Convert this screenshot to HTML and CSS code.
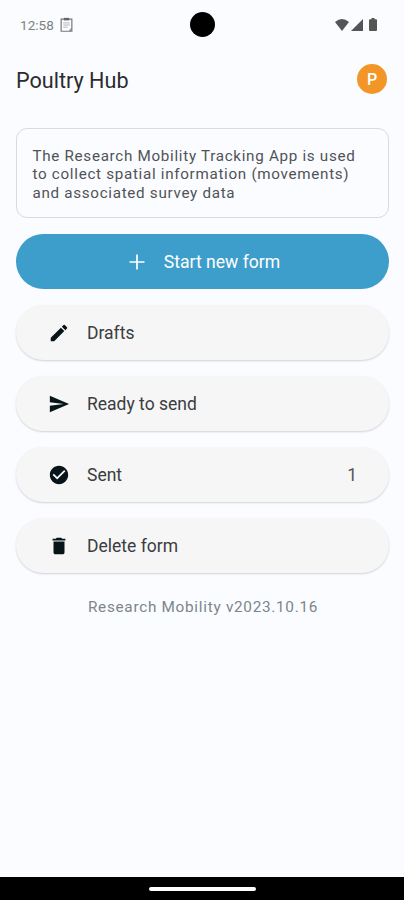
FILE: index.html
```
<!DOCTYPE html>
<html lang="en">
<head>
<meta charset="utf-8">
<title>Poultry Hub</title>
<link rel="stylesheet" href="styles.css">
</head>
<body>
<div class="screen">
  <header class="status">
    <div class="status-left">
      <span class="time">12:58</span>
      <svg class="clip" viewBox="0 0 12 14"><path d="M1 2h10v11.300H1z" fill="none" stroke="#777" stroke-width="1.100"/><path d="M3.500.8h5v2.400h-5z" fill="#666"/><path d="M3 5.500h6M3 7.500h6M3 9.500h4" stroke="#aaa" stroke-width=".8"/><path d="M8 12.800l3-3v3z" fill="#888"/></svg>
    </div>
    <span class="camera"></span>
    <div class="status-right">
      <svg class="wifi" viewBox="0 0 14 12"><path d="M0 3Q7-2.800 14 3L7 12z"/></svg>
      <svg class="signal" viewBox="0 0 12 12"><path d="M12 0v12H0z"/></svg>
      <svg class="battery" viewBox="0 0 8 13"><path d="M2.500 0h3v1.300H7q1 0 1 1V12q0 1-1 1H1q-1 0-1-1V2.300q0-1 1-1h1.500z"/></svg>
    </div>
  </header>
  <div class="appbar"><h1>Poultry Hub</h1><span class="avatar">P</span></div>
  <main>
    <p class="card">The Research Mobility Tracking App is used<br>to collect spatial information (movements)<br>and associated survey data</p>
    <div class="button primary">
      <svg class="plus" viewBox="0 0 16 16"><path d="M8 .5v15M.5 8h15" stroke="#fff" stroke-width="1.700"/></svg>
      <span>Start new form</span>
    </div>
    <div class="button"><svg class="icon" viewBox="0 0 24 24"><path d="M3 17.250V21h3.750L17.810 9.940l-3.750-3.750L3 17.250zM20.710 7.040a1 1 0 0 0 0-1.410l-2.340-2.340a1 1 0 0 0-1.410 0l-1.830 1.830 3.750 3.750 1.830-1.830z"/></svg><span>Drafts</span></div>
    <div class="button"><svg class="icon" viewBox="0 0 24 24"><path d="M2.010 21L23 12 2.010 3 2 10l15 2-15 2z"/></svg><span>Ready to send</span></div>
    <div class="button"><svg class="icon" viewBox="0 0 24 24"><path d="M12 2C6.480 2 2 6.480 2 12s4.480 10 10 10 10-4.480 10-10S17.520 2 12 2zm-2 15l-5-5 1.410-1.410L10 14.170l7.590-7.590L19 8l-9 9z"/></svg><span>Sent</span><span class="count">1</span></div>
    <div class="button"><svg class="icon" viewBox="0 0 24 24"><path d="M6 19c0 1.100.9 2 2 2h8c1.100 0 2-.9 2-2V7H6v12zM19 4h-3.500l-1-1h-5l-1 1H5v2h14V4z"/></svg><span>Delete form</span></div>
    <p class="version">Research Mobility v2023.10.16</p>
  </main>
  <footer><span></span></footer>
</div>
</body>
</html>
```
FILE: styles.css
```
* { box-sizing: border-box; }
body { margin: 0; font-family: Roboto, sans-serif; background: #fbfcff; }
h1, p { margin: 0; font-weight: 400; }
svg { display: block; flex: none; }
.screen { width: 404px; height: 900px; display: flex; flex-direction: column; }
.status { height: 49px; display: grid; grid-template-columns: 170px 25px 1fr; align-items: center; padding: 0 27px 0 20px; }
.status-left { display: flex; align-items: center; gap: 6px; }
.time { font-size: 13.5px; line-height: 16px; color: #808080; letter-spacing: .05px; }
.clip { width: 13px; height: 15px; }
.camera { width: 25px; height: 25px; border-radius: 50%; background: #000; }
.status-right { display: flex; align-items: center; justify-content: flex-end; fill: #555; }
.wifi { width: 14px; height: 12px; margin-right: 2px; }
.signal { width: 12px; height: 12px; margin-right: 6px; }
.battery { width: 8px; height: 13px; }
.appbar { height: 64px; display: flex; align-items: center; justify-content: space-between; padding: 0 17px 4px 16px; }
h1 { font-size: 21.6px; line-height: 28px; color: #2a2c2f; padding-top: 4px; }
.avatar { width: 30px; height: 30px; border-radius: 50%; background: #f29727; color: #fff; font-size: 16px; font-weight: 500; line-height: 31px; text-align: center; }
main { flex: 1; padding: 15px 15px 0 16px; display: flex; flex-direction: column; gap: 16px; }
.card { height: 90px; border: 1.5px solid #d8dade; border-radius: 11px; padding: 18px 15px 0 15.5px; font-size: 15.2px; line-height: 18.3px; letter-spacing: .7px; color: #505356; white-space: nowrap; }
.button { height: 55px; border-radius: 28px; background: #f6f6f6; box-shadow: 0 1px 2px rgba(0,0,0,.17); display: flex; align-items: center; padding: 0 32px; font-size: 17.5px; color: #3b3d3f; }
.icon { width: 22px; height: 22px; margin-right: 17px; fill: #07151b; }
.count { margin-left: auto; color: #555; }
.primary { background: #3e9ecb; color: #fff; box-shadow: none; justify-content: center; padding: 0 30px 0 34px; font-size: 17.6px; }
.plus { width: 16px; height: 16px; margin-right: 19px; }
.version { text-align: center; font-size: 15.3px; line-height: 20px; letter-spacing: .72px; color: #7c8589; margin-top: 8px; padding-left: 1px; }
footer { height: 23px; background: #000; display: flex; justify-content: center; align-items: center; }
footer span { width: 107px; height: 4px; border-radius: 2px; background: #fff; }
```
